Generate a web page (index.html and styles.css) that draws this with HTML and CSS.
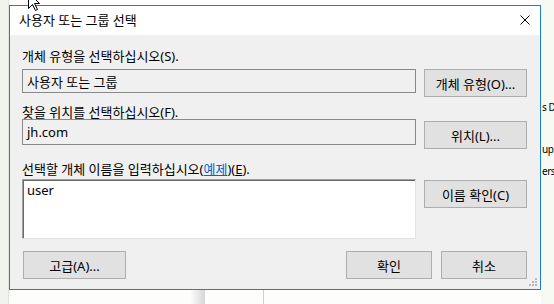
FILE: index.html
```html
<!DOCTYPE html>
<html lang="ko">
<head>
    <meta charset="UTF-8">
    <title>사용자 또는 그룹 선택</title>
    <link rel="stylesheet" href="styles.css">
</head>
<body>

<div class="desk-left"></div>
<div class="desk-top"></div>
<div class="desk-right">
    <span class="frag frag-1">s D</span>
    <span class="frag frag-2">up</span>
    <span class="frag frag-3">ers</span>
</div>

<div class="dialog">
    <div class="titlebar">
        <span class="title">사용자 또는 그룹 선택</span>
        <svg class="close" width="10" height="10" viewBox="0 0 10 10">
            <path d="M0.5 0.5 L9.5 9.5 M9.5 0.5 L0.5 9.5" stroke="#000" stroke-width="1" fill="none"/>
        </svg>
    </div>

    <div class="content">
        <div class="field-label label-1">개체 유형을 선택하십시오(S).</div>
        <div class="row row-1">
            <div class="textbox tb-1">사용자 또는 그룹</div>
            <button class="btn side-btn">개체 유형(O)...</button>
        </div>

        <div class="field-label label-2">찾을 위치를 선택하십시오(F).</div>
        <div class="row row-2">
            <div class="textbox tb-2">jh.com</div>
            <button class="btn side-btn">위치(L)...</button>
        </div>

        <div class="field-label label-3">선택할 개체 이름을 입력하십시오(<a class="link">예제</a>)(<u>E</u>).</div>
        <div class="row row-3">
            <div class="names">user</div>
            <button class="btn side-btn">이름 확인(C)</button>
        </div>

        <div class="footer">
            <button class="btn wide-btn">고급(A)...</button>
            <div class="footer-right">
                <button class="btn small-btn">확인</button>
                <button class="btn small-btn">취소</button>
            </div>
        </div>
    </div>

    <svg class="grip" width="9" height="9" viewBox="0 0 9 9">
        <rect x="6" y="0" width="2" height="2" fill="#b8b8b8"/>
        <rect x="3" y="3" width="2" height="2" fill="#b8b8b8"/>
        <rect x="6" y="3" width="2" height="2" fill="#b8b8b8"/>
        <rect x="0" y="6" width="2" height="2" fill="#b8b8b8"/>
        <rect x="3" y="6" width="2" height="2" fill="#b8b8b8"/>
        <rect x="6" y="6" width="2" height="2" fill="#b8b8b8"/>
    </svg>
</div>

<div class="desk-bottom">
    <div class="shade"></div>
    <div class="divider"></div>
</div>

<svg class="cursor" width="14" height="20" viewBox="0 0 14 20">
    <path d="M1.5 0.5 L1.5 16.5 L5.5 12.5 L8.5 18.5 L10.5 17.5 L7.5 11.5 L12.5 11.5 Z" fill="#fff" stroke="#000" stroke-width="1"/>
</svg>

</body>
</html>
```

FILE: styles.css
```css
body {
    margin: 0;
    width: 554px;
    height: 304px;
    overflow: hidden;
    position: relative;
    display: grid;
    grid-template-columns: 9px 532px 13px;
    grid-template-rows: 5px 285px 14px;
    background: #fbfcf9;
    font-family: "Noto Sans", "Noto Sans CJK KR", sans-serif;
    font-size: 13px;
    color: #000;
}
.desk-left {
    grid-column: 1;
    grid-row: 1 / 4;
    background: #f1f3ee;
    border-right: 1px solid #e2e5de;
    box-sizing: border-box;
}
.desk-top {
    grid-column: 2;
    grid-row: 1;
    background: #fdfdfd;
}
.desk-right {
    grid-column: 3;
    grid-row: 1 / 4;
    background: #f7f9f3;
    overflow: hidden;
    display: flex;
    flex-direction: column;
    font-family: "Noto Sans", sans-serif;
    font-size: 10px;
    line-height: 16px;
    letter-spacing: -0.5px;
    white-space: nowrap;
}
.frag {
    display: block;
    padding-left: 1px;
}
.frag-1 { margin-top: 99px; }
.frag-2 { margin-top: 26px; }
.frag-3 { margin-top: 6px; }

.dialog {
    grid-column: 2;
    grid-row: 2;
    position: relative;
    border: 1px solid #1c7fd0;
    background: #f0f0f0;
    display: flex;
    flex-direction: column;
}
.titlebar {
    height: 29px;
    background: #fff;
    display: flex;
    align-items: center;
    justify-content: space-between;
    padding: 0 10px 0 9px;
}
.title {
    line-height: 16px;
    margin-top: -1px;
}
.close {
    display: block;
    margin-top: -1px;
}
.content {
    padding: 13px 13px 0 12px;
    display: flex;
    flex-direction: column;
}
.field-label {
    height: 16px;
    line-height: 16px;
    white-space: nowrap;
}
.label-2 { margin-top: 7px; }
.label-3 { margin-top: 12px; }
.link {
    color: #0066cc;
    text-decoration: underline;
}
.row {
    display: grid;
    grid-template-columns: 394px 103px;
    column-gap: 8px;
    align-items: start;
}
.row-1 { margin-top: 5px; }
.row-2 { margin-top: -1px; }
.row-3 { margin-top: 2px; }
.textbox {
    box-sizing: border-box;
    border: 1px solid #8a8a8a;
    background: #f0f0f0;
    padding: 0 4px;
    display: flex;
    align-items: center;
}
.tb-1 { height: 24px; }
.tb-2 { height: 26px; }
.names {
    box-sizing: border-box;
    height: 60px;
    background: #fff;
    border: 1px solid;
    border-color: #a0a0a0 #e3e3e3 #e3e3e3 #a0a0a0;
    box-shadow: inset 1px 1px 0 #696969;
    padding: 2px 4px;
    line-height: 16px;
}
.btn {
    box-sizing: border-box;
    height: 28px;
    background: #e1e1e1;
    border: 1px solid #adadad;
    font-family: inherit;
    font-size: 13px;
    color: #000;
    padding: 0;
}
.side-btn {
    width: 103px;
}
.row-2 .side-btn { margin-top: 2px; }
.row-3 .side-btn { margin-top: 1px; }
.footer {
    margin-top: 12px;
    display: flex;
    justify-content: space-between;
}
.wide-btn {
    width: 103px;
    margin-left: 1px;
}
.footer-right {
    display: flex;
    gap: 9px;
}
.small-btn {
    width: 86px;
}
.grip {
    position: absolute;
    right: 2px;
    bottom: 2px;
}
.desk-bottom {
    grid-column: 2;
    grid-row: 3;
    background: #fdfdfb;
    display: flex;
}
.shade {
    width: 15px;
    margin-left: 181px;
    background: linear-gradient(to right, #fdfdfd, #d6d6d6);
}
.divider {
    width: 1px;
    margin-left: 58px;
    background: #cfcfcf;
}
.cursor {
    position: absolute;
    left: 27px;
    top: -8px;
}
```
